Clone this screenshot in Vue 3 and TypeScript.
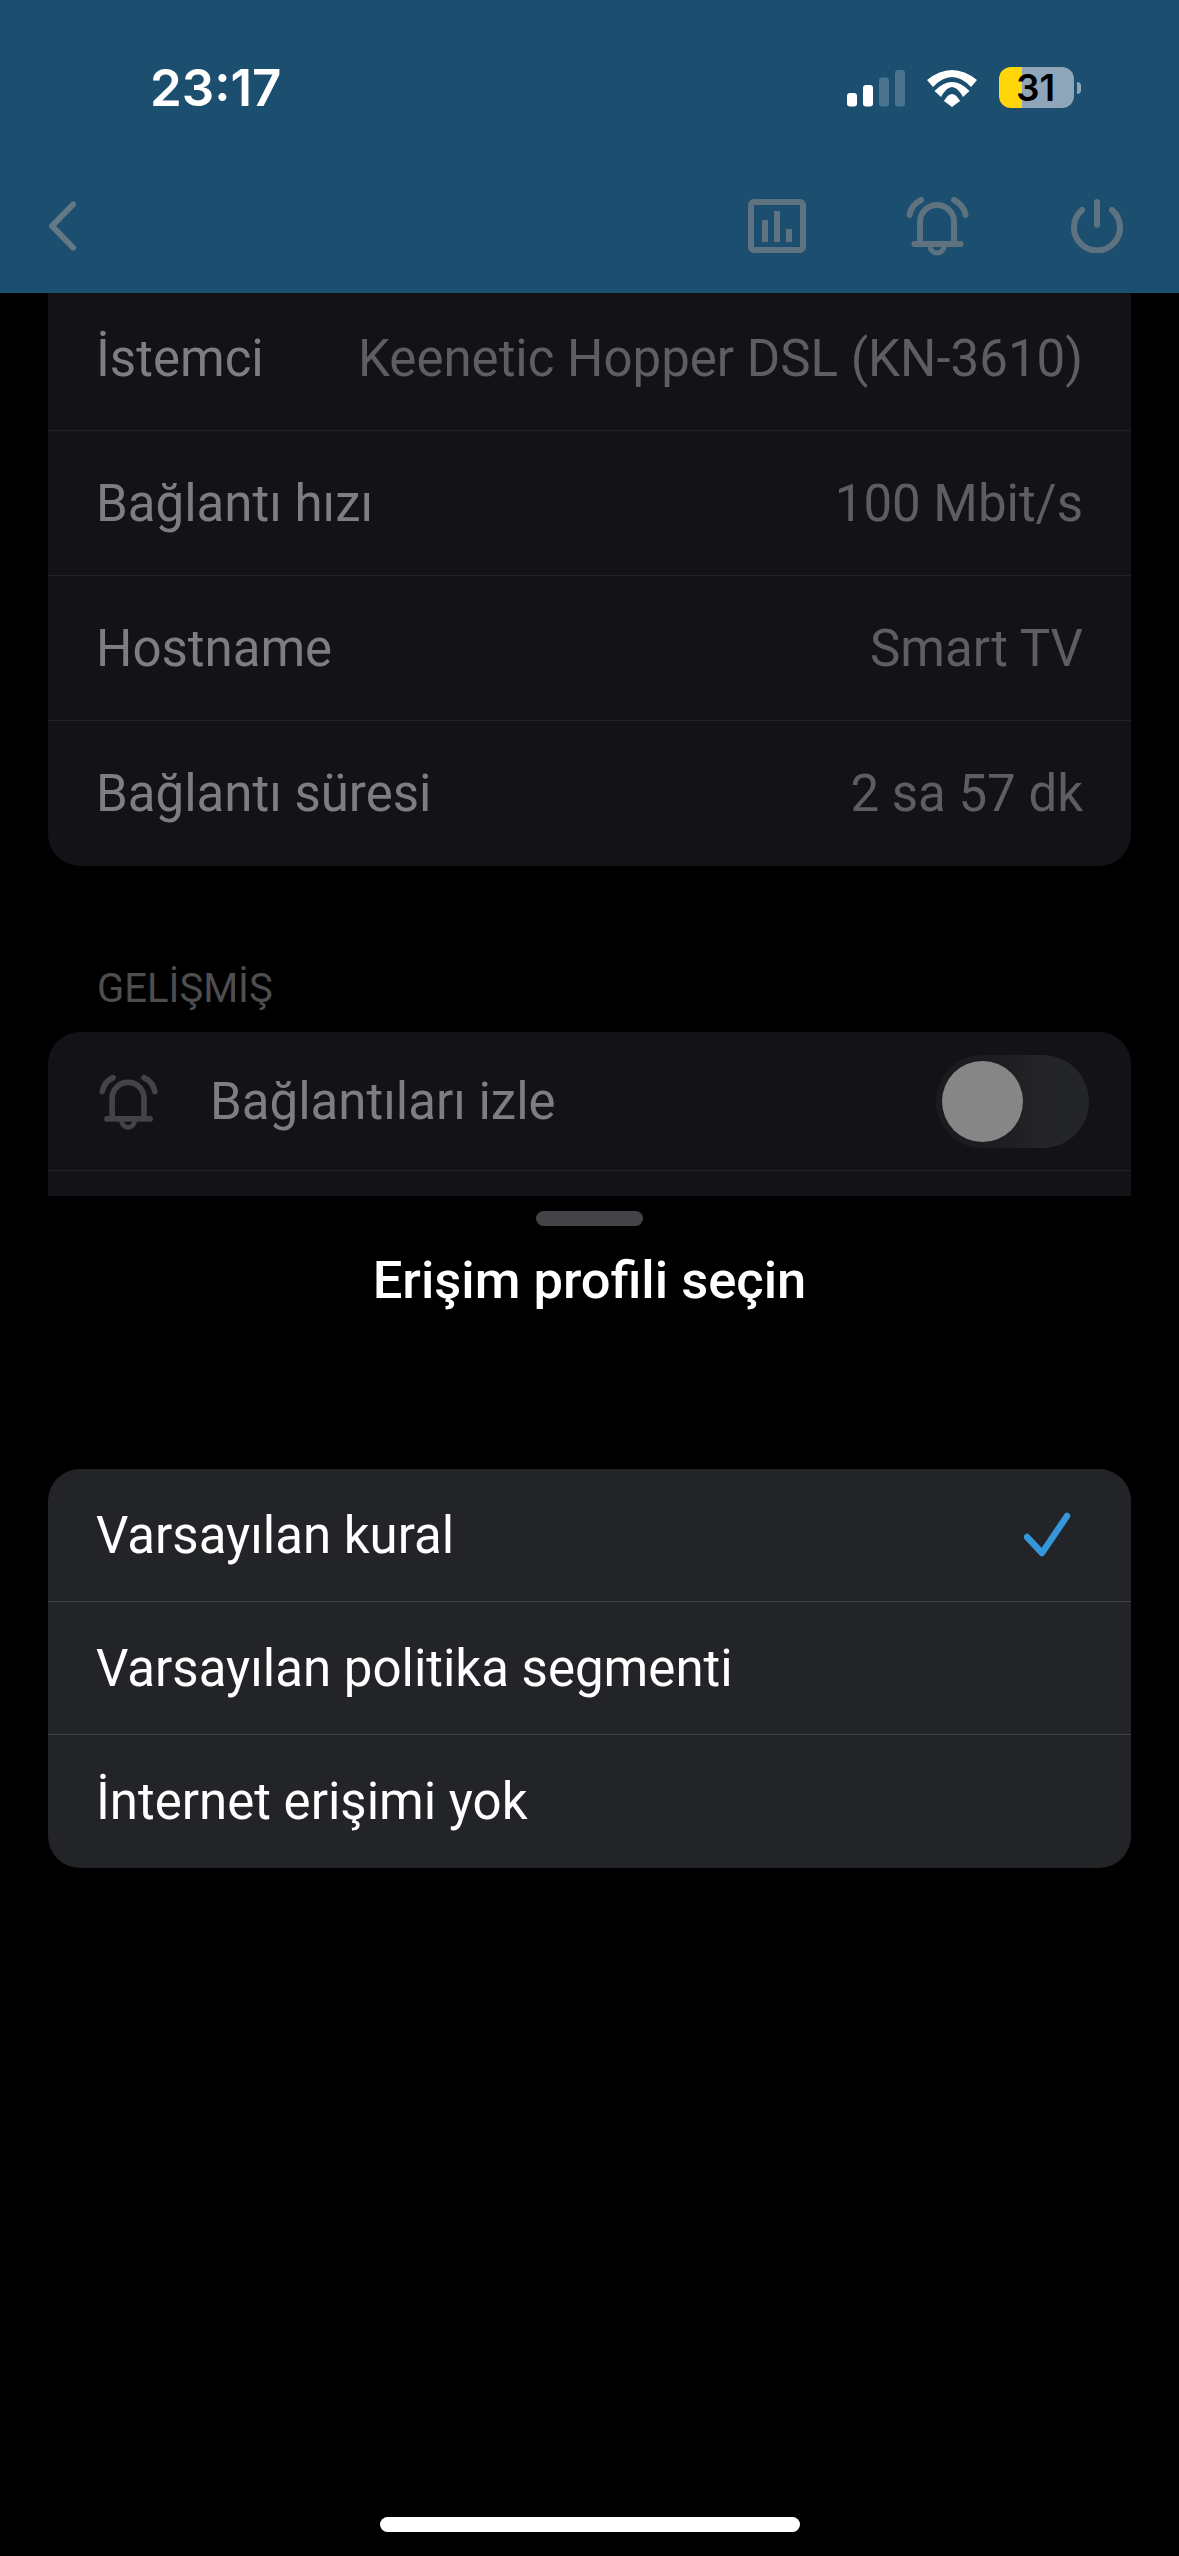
<script setup lang="ts">
interface InfoRow {
  label: string;
  value: string;
}

const infoRows: InfoRow[] = [
  { label: 'İstemci', value: 'Keenetic Hopper DSL (KN-3610)' },
  { label: 'Bağlantı hızı', value: '100 Mbit/s' },
  { label: 'Hostname', value: 'Smart TV' },
  { label: 'Bağlantı süresi', value: '2 sa 57 dk' }
]

const profiles = [
  { name: 'Varsayılan kural', selected: true },
  { name: 'Varsayılan politika segmenti', selected: false },
  { name: 'İnternet erişimi yok', selected: false }
]
</script>

<template>
  <div class="screen">
    <header class="header">
      <div class="status">
        <span class="time">23:17</span>
        <div class="status-icons">
          <svg width="58" height="38" viewBox="0 0 58 38">
            <rect x="0" y="24" width="10" height="13.5" rx="3" fill="#fff" />
            <rect x="16" y="16" width="10" height="21.5" rx="3" fill="#fff" />
            <rect x="32" y="8.500" width="10" height="29" rx="3" fill="#4a7390" />
            <rect x="48" y="1" width="10" height="36.5" rx="3" fill="#4a7390" />
          </svg>
          <svg width="50" height="38" viewBox="0 0 50 38">
            <path d="M0 11Q25 -9 50 11L44 18Q25 -2 6 18Z" fill="#fff" />
            <path d="M7.500 22Q25 4 42.500 22L36 28Q25 8 14 28Z" fill="#fff" />
            <path d="M17 32Q25 18 33 32L25 38Z" fill="#fff" />
          </svg>
          <div class="battery">
            <div class="battery-body">
              <span class="battery-text">31</span>
            </div>
            <span class="battery-tip"></span>
          </div>
        </div>
      </div>
      <nav class="nav">
        <svg width="34" height="52" viewBox="0 0 34 52">
          <path d="M27 4.500L6 26L27 47.500" fill="none" stroke="#647885" stroke-width="6" stroke-linecap="round" stroke-linejoin="round" />
        </svg>
        <div class="nav-actions">
          <svg width="58" height="54" viewBox="0 0 58 54">
            <rect x="3" y="3" width="52" height="48" rx="3" fill="none" stroke="#5f727f" stroke-width="6" />
            <path d="M17 43V21M29 43V12M41 43V30" stroke="#5f727f" stroke-width="6" fill="none" />
          </svg>
          <svg width="64" height="60" viewBox="0 0 64 60">
            <path d="M8.500 48H54.500" stroke="#5f727f" stroke-width="6" stroke-linecap="round" />
            <path d="M14 48V26a17 17 0 0 1 34 0V48" fill="none" stroke="#5f727f" stroke-width="6" />
            <path d="M24 50a7 7 0 0 0 14 0" fill="none" stroke="#5f727f" stroke-width="5" />
            <path d="M3.500 19Q5 9 15 4M59.500 19Q58 9 48 4" fill="none" stroke="#5f727f" stroke-width="6" stroke-linecap="round" />
          </svg>
          <svg width="54" height="54" viewBox="0 0 54 54">
            <path d="M27 3V26" stroke="#5f727f" stroke-width="6" stroke-linecap="round" />
            <path d="M12 11a23 23 0 1 0 30 0" fill="none" stroke="#5f727f" stroke-width="6" stroke-linecap="round" />
          </svg>
        </div>
      </nav>
    </header>

    <main class="content">
      <section class="card info-card">
        <div v-for="row in infoRows" :key="row.label" class="info-row">
          <span class="info-label">{{ row.label }}</span>
          <span class="info-value">{{ row.value }}</span>
        </div>
      </section>
      <h2 class="section-title">GELİŞMİŞ</h2>
      <section class="card">
        <div class="info-row monitor-row">
          <svg class="monitor-icon" width="60" height="58" viewBox="0 0 64 60">
            <path d="M8.500 48H54.500" stroke="#444446" stroke-width="6" stroke-linecap="round" />
            <path d="M14 48V26a17 17 0 0 1 34 0V48" fill="none" stroke="#444446" stroke-width="6" />
            <path d="M24 50a7 7 0 0 0 14 0" fill="none" stroke="#444446" stroke-width="5" />
            <path d="M3.500 19Q5 9 15 4M59.500 19Q58 9 48 4" fill="none" stroke="#444446" stroke-width="6" stroke-linecap="round" />
          </svg>
          <span class="info-label">Bağlantıları izle</span>
          <div class="toggle"><span class="knob"></span></div>
        </div>
        <div class="info-row"></div>
      </section>
    </main>

    <section class="sheet">
      <div class="handle"></div>
      <h1 class="sheet-title">Erişim profili seçin</h1>
      <ul class="card profile-list">
        <li v-for="p in profiles" :key="p.name" class="profile-row">
          <span>{{ p.name }}</span>
          <svg v-if="p.selected" width="48" height="48" viewBox="0 0 48 48">
            <path d="M3 26L18 42L43 5" fill="none" stroke="#3597da" stroke-width="6.500" stroke-linecap="round" stroke-linejoin="round" />
          </svg>
        </li>
      </ul>
      <div class="home-indicator"></div>
    </section>
  </div>
</template>

<style scoped>
.screen {
  width: 1179px;
  height: 2556px;
  display: flex;
  flex-direction: column;
  background: #000;
  overflow: hidden;
  font-family: Roboto, "Noto Sans", sans-serif;
}

.header {
  height: 293px;
  flex-shrink: 0;
  background: #1c4e6f;
}

.status {
  height: 196px;
  display: flex;
  justify-content: space-between;
  align-items: flex-start;
  padding: 60px 98px 0 150px;
  box-sizing: border-box;
}

.time {
  font-family: Inter, "Liberation Sans", sans-serif;
  font-size: 51px;
  line-height: 56px;
  font-weight: 600;
  color: #fff;
}

.status-icons {
  display: flex;
  align-items: center;
  gap: 22px;
  padding-top: 7px;
}

.battery {
  display: flex;
  align-items: center;
  gap: 3px;
}

.battery-body {
  width: 75px;
  height: 41px;
  border-radius: 12px;
  background: linear-gradient(90deg, #ffd60a 23px, #8ea6b8 23px);
  display: flex;
  align-items: center;
  justify-content: center;
}

.battery-text {
  font-family: Inter, "Liberation Sans", sans-serif;
  font-size: 37px;
  line-height: 37px;
  font-weight: 600;
  color: #000;
  margin-right: 2px;
}

.battery-tip {
  width: 4px;
  height: 12px;
  border-radius: 0 6px 6px 0;
  background: #8ea6b8;
}

.nav {
  display: flex;
  justify-content: space-between;
  align-items: center;
  padding: 0 55px 0 46px;
  height: 60px;
}

.nav-actions {
  display: flex;
  align-items: center;
  gap: 100px;
}

.content {
  height: 903px;
  flex-shrink: 0;
  padding: 0 48px;
  box-sizing: border-box;
  overflow: hidden;
}

.card {
  background: #131317;
  border-radius: 32px;
}

.info-card {
  margin-top: -7px;
  border-radius: 0 0 32px 32px;
}

.info-row {
  height: 145px;
  box-sizing: border-box;
  padding: 0 48px;
  display: flex;
  justify-content: space-between;
  align-items: center;
  font-size: 51px;
  border-bottom: 1px solid #232327;
}

.info-row:last-child {
  border-bottom: 0;
}

.info-label {
  color: #7e7e80;
}

.info-value {
  color: #5d5e61;
}

.section-title {
  margin: 102px 0 0 49px;
  height: 64px;
  font-size: 40px;
  line-height: 42px;
  font-weight: 400;
  color: #4e4e50;
}

.monitor-row {
  height: 139px;
  justify-content: flex-start;
  padding: 1px 42px 0 48px;
}

.monitor-icon {
  margin: 0 51px 0 3px;
}

.toggle {
  margin-left: auto;
  width: 153px;
  height: 93px;
  border-radius: 47px;
  background: linear-gradient(90deg, #1b1b1f, #1e1e22 45%, #242527 70%);
  display: flex;
  align-items: center;
  padding-left: 6px;
  box-sizing: border-box;
}

.knob {
  width: 81px;
  height: 81px;
  border-radius: 50%;
  background: #868686;
}

.sheet {
  flex: 1;
  position: relative;
  display: flex;
  flex-direction: column;
  padding: 15px 48px 0;
}

.handle {
  width: 107px;
  height: 15px;
  border-radius: 8px;
  background: #444448;
  align-self: center;
}

.sheet-title {
  margin: 24px 0 1px;
  text-align: center;
  font-size: 52.5px;
  line-height: 60px;
  font-weight: 500;
  color: #fff;
}

.profile-list {
  margin: 158px 0 0;
  padding: 0;
  list-style: none;
  background: #232428;
  overflow: hidden;
}

.profile-row {
  height: 133px;
  box-sizing: border-box;
  padding: 0 59px 0 48px;
  display: flex;
  justify-content: space-between;
  align-items: center;
  font-size: 51px;
  color: #fff;
  border-bottom: 1px solid #404145;
}

.profile-row:last-child {
  border-bottom: 0;
}

.home-indicator {
  position: absolute;
  left: 380px;
  bottom: 24px;
  width: 420px;
  height: 15px;
  border-radius: 8px;
  background: #fff;
}
</style>
